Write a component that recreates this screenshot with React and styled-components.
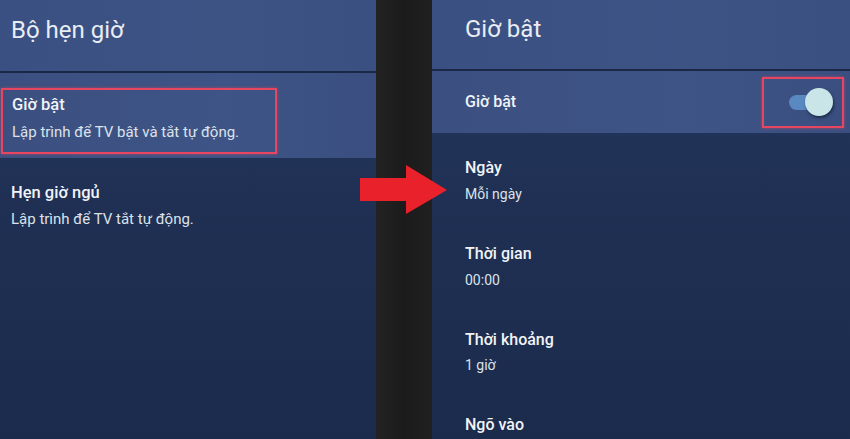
import React from "react";
import styled, { createGlobalStyle } from "styled-components";

const GlobalStyle = createGlobalStyle`
  html, body {
    margin: 0;
    padding: 0;
    background: #1c1c1c;
  }
  body {
    font-family: Roboto, "Noto Sans", "DejaVu Sans", sans-serif;
    -webkit-font-smoothing: antialiased;
  }
`;

const Screen = styled.div`
  position: relative;
  width: 850px;
  height: 439px;
  overflow: hidden;
  display: grid;
  grid-template-columns: 376px 56px 418px;
  background: #1c1c1c;
`;

const Gap = styled.div`
  background: linear-gradient(90deg, #232323 0%, #1b1b1b 50%, #202020 100%);
`;

const Panel = styled.div`
  display: flex;
  flex-direction: column;
  background: linear-gradient(180deg, #26395f 0%, #1f3054 45%, #1b2b4c 100%);
  overflow: hidden;
`;

const Header = styled.div`
  height: ${(p) => p.h}px;
  box-sizing: border-box;
  display: flex;
  align-items: center;
  padding-left: ${(p) => p.pad}px;
  padding-bottom: 12px;
  background: linear-gradient(90deg, #3a5082 0%, #3c5384 60%, #3a5080 100%);
  border-bottom: 2px solid #1b2746;
  color: #e9edf3;
  font-size: 24px;
  font-weight: 400;
`;

const Selected = styled.div`
  height: ${(p) => p.h}px;
  box-sizing: border-box;
  display: flex;
  align-items: ${(p) => (p.center ? "center" : "flex-start")};
  justify-content: space-between;
  padding: ${(p) => p.padding};
  background: linear-gradient(90deg, #3b5080 0%, #3e5486 60%, #3a4f80 100%);
`;

const Highlight = styled.div`
  box-sizing: border-box;
  border: 2px solid #e84560;
  box-shadow: 0 0 3px rgba(232, 69, 96, 0.6);
  width: ${(p) => p.w}px;
  height: ${(p) => p.h}px;
  display: flex;
  flex-direction: column;
  justify-content: ${(p) => (p.center ? "center" : "flex-start")};
  align-items: ${(p) => (p.center ? "flex-end" : "flex-start")};
  padding: ${(p) => p.padding || "0"};
`;

const Title = styled.div`
  color: #f1f3f6;
  font-size: ${(p) => p.size || 16}px;
  font-weight: 500;
  line-height: 20px;
`;

const Sub = styled.div`
  color: #dde2ea;
  font-size: ${(p) => p.size || 14}px;
  font-weight: 400;
  line-height: 18px;
  margin-top: ${(p) => p.mt || 7}px;
`;

const List = styled.div`
  display: flex;
  flex-direction: column;
  padding: ${(p) => p.padding};
  gap: ${(p) => p.gap}px;
`;

const Item = styled.div`
  display: flex;
  flex-direction: column;
`;

const Toggle = styled.div`
  position: relative;
  width: 44px;
  height: 28px;
`;

const Track = styled.div`
  position: absolute;
  left: 0;
  top: 7px;
  width: 32px;
  height: 15px;
  border-radius: 8px;
  background: #5a88c0;
`;

const Knob = styled.div`
  position: absolute;
  right: 0;
  top: 0;
  width: 28px;
  height: 28px;
  border-radius: 50%;
  background: #c9e5e7;
  box-shadow: 1px 2px 3px rgba(10, 20, 40, 0.6);
`;

const Arrow = styled.svg`
  position: absolute;
  left: 360px;
  top: 165px;
`;

export default function App() {
  return (
    <>
      <GlobalStyle />
      <Screen>
        <Panel>
          <Header h={73} pad={11}>Bộ hẹn giờ</Header>
          <Selected h={85} padding="15px 0 0 1px">
            <Highlight w={276} h={66} padding="5px 0 0 9px">
              <Title size={16.5}>Giờ bật</Title>
              <Sub size={15} mt={8}>Lập trình để TV bật và tắt tự động.</Sub>
            </Highlight>
          </Selected>
          <List padding="25px 0 0 11px" gap={0}>
            <Item>
              <Title size={16.5}>Hẹn giờ ngủ</Title>
              <Sub size={15} mt={7}>Lập trình để TV tắt tự động.</Sub>
            </Item>
          </List>
        </Panel>
        <Gap />
        <Panel>
          <Header h={71} pad={33}>Giờ bật</Header>
          <Selected h={62} center padding="0 6px 0 33px">
            <Title>Giờ bật</Title>
            <Highlight w={82} h={51} center padding="0 9px 0 0">
              <Toggle>
                <Track />
                <Knob />
              </Toggle>
            </Highlight>
          </Selected>
          <List padding="25px 0 0 33px" gap={41}>
            <Item>
              <Title>Ngày</Title>
              <Sub mt={7}>Mỗi ngày</Sub>
            </Item>
            <Item>
              <Title>Thời gian</Title>
              <Sub mt={7}>00:00</Sub>
            </Item>
            <Item>
              <Title>Thời khoảng</Title>
              <Sub mt={6}>1 giờ</Sub>
            </Item>
            <Item>
              <Title>Ngõ vào</Title>
            </Item>
          </List>
        </Panel>
        <Arrow width="88" height="50" viewBox="0 0 88 50">
          <polygon
            points="0,13 46,13 46,0 87,25 46,49 46,36 0,36"
            fill="#e8212b"
          />
        </Arrow>
      </Screen>
    </>
  );
}
